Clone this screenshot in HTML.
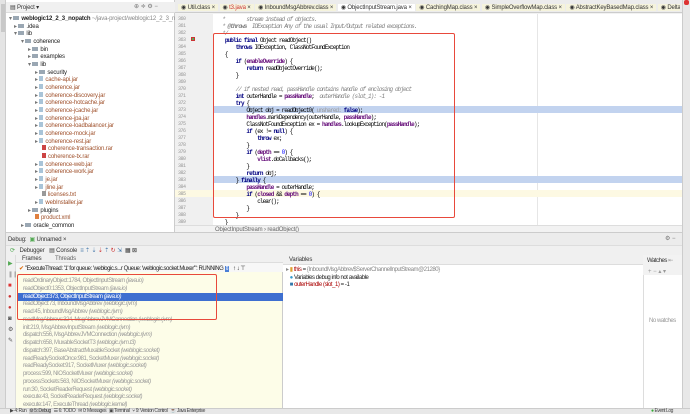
<!DOCTYPE html><html><head><meta charset="utf-8"><style>
*{margin:0;padding:0;box-sizing:border-box}
body{width:690px;height:414px;overflow:hidden;background:#f2f2f2;font-family:"Liberation Sans",sans-serif;font-size:6px;position:relative;color:#222}
.a{position:absolute;white-space:nowrap}
.s{letter-spacing:-0.45px}
.t{letter-spacing:-0.15px}
.m{font-family:"Liberation Mono",monospace;font-size:6px;letter-spacing:-0.9px}
pre.m{white-space:pre}
.k{color:#000080;font-weight:bold}
.f{color:#660e7a;font-weight:bold}
.c{color:#808080;font-style:italic}
.br{color:#a0522d}
.fo{display:inline-block;width:6px;height:4px;background:#9aa7b3;margin-right:2px;vertical-align:-0px}
.jr{display:inline-block;width:4px;height:5px;background:#a9c4d8;margin-right:2px}
</style></head><body>
<div class="a" style="left:0;top:0;width:6px;height:408px;background:#e4e4e4;border-right:1px solid #ccc"></div>
<div class="a" style="left:1px;top:4px;width:4px;height:28px;background:#c8c8c8"></div>
<div class="a" style="left:6px;top:0;width:169px;height:232px;background:#fff;border-right:1px solid #ccc"></div>
<div class="a" style="left:6px;top:2px;width:169px;height:11px;background:#f0f0f0;border-bottom:1px solid #ddd"></div>
<div class="a t" style="left:10px;top:4px;color:#333">▤ Project ▾</div>
<div class="a" style="left:134px;top:3px;color:#777">⊕ ≑ ⚙ −</div>
<div class="a t" style="left:9px;top:15px"><span style="color:#777">▾ </span><span class="fo"></span><b>weblogic12_2_3_nopatch</b> <span style="color:#888">~/java-project/weblogic12_2_3_n</span></div>
<div class="a t" style="left:14px;top:23px"><span style="color:#777">▸ </span><span class="fo"></span>.idea</div>
<div class="a t" style="left:14px;top:30px"><span style="color:#777">▾ </span><span class="fo"></span>lib</div>
<div class="a t" style="left:21px;top:38px"><span style="color:#777">▾ </span><span class="fo"></span>coherence</div>
<div class="a t" style="left:28px;top:46px"><span style="color:#777">▸ </span><span class="fo"></span>bin</div>
<div class="a t" style="left:28px;top:53px"><span style="color:#777">▸ </span><span class="fo"></span>examples</div>
<div class="a t" style="left:28px;top:61px"><span style="color:#777">▾ </span><span class="fo"></span>lib</div>
<div class="a t" style="left:35px;top:69px"><span style="color:#777">▸ </span><span class="fo"></span>security</div>
<div class="a t br" style="left:35px;top:76px"><span style="color:#777">▸ </span><span class="jr"></span>cache-api.jar</div>
<div class="a t br" style="left:35px;top:84px"><span style="color:#777">▸ </span><span class="jr"></span>coherence.jar</div>
<div class="a t br" style="left:35px;top:92px"><span style="color:#777">▸ </span><span class="jr"></span>coherence-discovery.jar</div>
<div class="a t br" style="left:35px;top:99px"><span style="color:#777">▸ </span><span class="jr"></span>coherence-hotcache.jar</div>
<div class="a t br" style="left:35px;top:107px"><span style="color:#777">▸ </span><span class="jr"></span>coherence-jcache.jar</div>
<div class="a t br" style="left:35px;top:115px"><span style="color:#777">▸ </span><span class="jr"></span>coherence-jpa.jar</div>
<div class="a t br" style="left:35px;top:122px"><span style="color:#777">▸ </span><span class="jr"></span>coherence-loadbalancer.jar</div>
<div class="a t br" style="left:35px;top:130px"><span style="color:#777">▸ </span><span class="jr"></span>coherence-mock.jar</div>
<div class="a t br" style="left:35px;top:138px"><span style="color:#777">▸ </span><span class="jr"></span>coherence-rest.jar</div>
<div class="a t br" style="left:42px;top:145px"><span class="jr" style="background:#c44"></span>coherence-transaction.rar</div>
<div class="a t br" style="left:42px;top:153px"><span class="jr" style="background:#c44"></span>coherence-tx.rar</div>
<div class="a t br" style="left:35px;top:161px"><span style="color:#777">▸ </span><span class="jr"></span>coherence-web.jar</div>
<div class="a t br" style="left:35px;top:168px"><span style="color:#777">▸ </span><span class="jr"></span>coherence-work.jar</div>
<div class="a t br" style="left:35px;top:176px"><span style="color:#777">▸ </span><span class="jr"></span>je.jar</div>
<div class="a t br" style="left:35px;top:184px"><span style="color:#777">▸ </span><span class="jr"></span>jline.jar</div>
<div class="a t br" style="left:42px;top:191px"><span class="jr" style="background:#999"></span>licenses.txt</div>
<div class="a t br" style="left:35px;top:199px"><span style="color:#777">▸ </span><span class="jr"></span>webInstaller.jar</div>
<div class="a t" style="left:28px;top:207px"><span style="color:#777">▸ </span><span class="fo"></span>plugins</div>
<div class="a t br" style="left:35px;top:214px"><span class="jr" style="background:#e08040"></span>product.xml</div>
<div class="a t" style="left:21px;top:222px"><span style="color:#777">▸ </span><span class="fo"></span>oracle_common</div>
<div class="a" style="left:175px;top:0;width:507px;height:13px;background:#ececec;border-bottom:1px solid #ccc"></div>
<div class="a t" style="left:178px;top:4px;color:#333;overflow:hidden;width:502px">
<span style="background:#f5f3dc;padding:1px 3px">◉ Util.class ×</span>
<span style="background:#f5f3dc;padding:1px 3px">◉ <span style="color:#c33">t3.java</span> ×</span>
<span style="background:#f5f3dc;padding:1px 3px">◉ InboundMsgAbbrev.class ×</span>
<span style="background:#fff;padding:1px 3px">◉ ObjectInputStream.java ×</span>
<span style="background:#f5f3dc;padding:1px 3px">◉ CachingMap.class ×</span>
<span style="background:#f5f3dc;padding:1px 3px">◉ SimpleOverflowMap.class ×</span>
<span style="background:#f5f3dc;padding:1px 3px">◉ AbstractKeyBasedMap.class ×</span>
<span style="background:#f5f3dc;padding:1px 3px">◉ DeltaMap.class ×</span>
<span style="background:#f5f3dc;padding:1px 3px">◉ Observ</span></div>
<div class="a" style="left:175px;top:14px;width:507px;height:211px;background:#fff"></div>
<div class="a" style="left:175px;top:14px;width:38px;height:211px;background:#f0f0f0"></div>
<div class="a" style="left:537px;top:14px;width:1px;height:211px;background:#e6e6e6"></div>
<div class="a" style="left:213px;top:106px;width:469px;height:7px;background:#c2d3ef"></div>
<div class="a" style="left:213px;top:176px;width:469px;height:7px;background:#c2d3ef"></div>
<div class="a" style="left:213px;top:190px;width:469px;height:7px;background:#fdf9e3"></div>
<div class="a" style="left:175px;top:190px;width:38px;height:7px;background:#fdf9e3"></div>
<div class="a m" style="left:178px;top:16px;color:#999;line-height:7px;font-size:5px;letter-spacing:-0.5px">360<br>361<br>362<br>363<br>364<br>365<br>366<br>367<br>368<br>369<br>370<br>371<br>372<br>373<br>374<br>375<br>376<br>377<br>378<br>379<br>380<br>381<br>382<br>383<br>384<br>385<br>386<br>387<br>388<br>389</div>
<div class="a" style="left:191px;top:37px;width:4px;height:4px;background:#5a5;border:1px solid #c33"></div>
<pre class="a m" style="left:214px;top:16px;line-height:7px;color:#000"><span class="c">   *        stream instead of objects.
   * <b>@throws</b>  IOException Any of the usual Input/Output related exceptions.
   */</span>
    <span class="k">public final</span> Object readObject()
        <span class="k">throws</span> IOException, ClassNotFoundException
    {
        <span class="k">if</span> (<span class="f">enableOverride</span>) {
            <span class="k">return</span> readObjectOverride();
        }

        <span class="c">// if nested read, passHandle contains handle of enclosing object</span>
        <span class="k">int</span> outerHandle = <span class="f">passHandle</span>;  <span class="c">outerHandle (slot_1): -1</span>
        <span class="k">try</span> {
            Object obj = readObject0( <span style="color:#999">unshared:</span> <span class="k">false</span>);
            <span class="f">handles</span>.markDependency(outerHandle, <span class="f">passHandle</span>);
            ClassNotFoundException ex = <span class="f">handles</span>.lookupException(<span class="f">passHandle</span>);
            <span class="k">if</span> (ex != <span class="k">null</span>) {
                <span class="k">throw</span> ex;
            }
            <span class="k">if</span> (<span class="f">depth</span> == <span style="color:#00f">0</span>) {
                <span class="f">vlist</span>.doCallbacks();
            }
            <span class="k">return</span> obj;
        } <span class="k">finally</span> {
            <span class="f">passHandle</span> = outerHandle;
            <span class="k">if</span> (<span class="f">closed</span> &amp;&amp; <span class="f">depth</span> == <span style="color:#00f">0</span>) {
                clear();
            }
        }
    }</pre>
<div class="a" style="left:213px;top:33px;width:242px;height:185px;border:1px solid #e8493b;border-radius:2px"></div>
<div class="a" style="left:175px;top:225px;width:507px;height:11px;background:#f2f2f2;border-top:1px solid #ddd"></div>
<div class="a t" style="left:215px;top:227px;color:#666">ObjectInputStream › readObject()</div>
<div class="a" style="left:682px;top:0;width:8px;height:408px;background:#e8e8e8;border-left:1px solid #ccc"></div>
<div class="a" style="left:684px;top:0;width:5px;height:5px;background:#d33;border-radius:2px"></div>
<div class="a" style="left:6px;top:232px;width:676px;height:13px;background:#ececec;border-top:1px solid #ccc"></div>
<div class="a t" style="left:8px;top:236px;color:#333">Debug: &nbsp;<span style="color:#5a5">▣</span> Unnamed ×</div>
<div class="a" style="left:665px;top:235px;color:#777">⚙ −</div>
<div class="a" style="left:6px;top:245px;width:676px;height:10px;background:#f0f0f0;border-top:1px solid #ddd"></div>
<div class="a t" style="left:10px;top:247px;color:#333"><span style="color:#5a5">⟳</span> &nbsp; Debugger &nbsp; ▤ Console &nbsp;<span style="color:#47a">≡ ⇡ ⇣ <span style="color:#c33">⇣</span> ⇡ <span style="color:#c33">↻</span> ⇲</span> &nbsp;▦ ⊠</div>
<div class="a" style="left:6px;top:255px;width:10px;height:153px;background:#f0f0f0;border-right:1px solid #ddd"></div>
<div class="a" style="left:8px;top:259px;color:#5a5;line-height:11px">▶<br><span style="color:#aaa">❚❚</span><br><span style="color:#d33">■</span><br><span style="color:#c33">●</span><br><span style="color:#c33">●</span><br><span style="color:#555">◙</span><br><span style="color:#555">⚙</span><br><span style="color:#555">✎</span></div>
<div class="a" style="left:16px;top:255px;width:267px;height:153px;background:#fdfde8;border-right:1px solid #ccc"></div>
<div class="a" style="left:16px;top:255px;width:267px;height:8px;background:#f0f0f0;border-bottom:1px solid #ddd"></div>
<div class="a t" style="left:22px;top:256px;color:#333">Frames &nbsp; &nbsp; &nbsp; &nbsp; <span style="color:#666">Threads</span></div>
<div class="a" style="left:16px;top:263px;width:267px;height:9px;background:#f7f7f7"></div>
<div class="a s" style="left:19px;top:265px;color:#222"><span style="color:#d60">✔</span> "ExecuteThread: '1' for queue: 'weblogic.s...r Queue: 'weblogic.socket.Muxer'": RUNNING <span style="background:#4a7fd6;color:#fff">⇕</span> &nbsp; ↑ ↓ ⊤</div>
<div class="a" style="left:17px;top:293px;width:266px;height:8px;background:#3e6fd0"></div>
<div class="a s" style="left:23px;top:278px;line-height:7.75px;color:#999">readOrdinaryObject:1784, ObjectInputStream <i>(java.io)</i><br>readObject0:1353, ObjectInputStream <i>(java.io)</i><br><span style="color:#fff">readObject:373, ObjectInputStream <i>(java.io)</i></span><br>readObject:73, InboundMsgAbbrev <i>(weblogic.rjvm)</i><br>read:45, InboundMsgAbbrev <i>(weblogic.rjvm)</i><br>readMsgAbbrevs:324, MsgAbbrevJVMConnection <i>(weblogic.rjvm)</i><br>init:219, MsgAbbrevInputStream <i>(weblogic.rjvm)</i><br>dispatch:556, MsgAbbrevJVMConnection <i>(weblogic.rjvm)</i><br>dispatch:658, MuxableSocketT3 <i>(weblogic.rjvm.t3)</i><br>dispatch:397, BaseAbstractMuxableSocket <i>(weblogic.socket)</i><br>readReadySocketOnce:981, SocketMuxer <i>(weblogic.socket)</i><br>readReadySocket:917, SocketMuxer <i>(weblogic.socket)</i><br>process:599, NIOSocketMuxer <i>(weblogic.socket)</i><br>processSockets:563, NIOSocketMuxer <i>(weblogic.socket)</i><br>run:30, SocketReaderRequest <i>(weblogic.socket)</i><br>execute:43, SocketReaderRequest <i>(weblogic.socket)</i><br>execute:147, ExecuteThread <i>(weblogic.kernel)</i></div>
<div class="a" style="left:17px;top:274px;width:200px;height:46px;border:1px solid #e8493b;border-radius:2px"></div>
<div class="a" style="left:283px;top:255px;width:360px;height:153px;background:#fff"></div>
<div class="a" style="left:283px;top:255px;width:360px;height:10px;background:#f0f0f0;border-bottom:1px solid #ddd"></div>
<div class="a t" style="left:289px;top:257px;color:#333">Variables</div>
<div class="a s" style="left:286px;top:267px;line-height:7.7px"><span style="color:#888">▸</span> <span style="color:#e0a030">▮</span> <span style="color:#a00">this</span> = <span style="color:#888">{InboundMsgAbbrev$ServerChannelInputStream@21280}</span><br>&nbsp;&nbsp; <span style="color:#39c">●</span> Variables debug info not available<br>&nbsp;&nbsp; <span style="color:#37a">■</span> <span style="color:#a00">outerHandle (slot_1)</span> = -1</div>
<div class="a" style="left:643px;top:255px;width:39px;height:153px;background:#fff;border-left:1px solid #ddd"></div>
<div class="a" style="left:643px;top:255px;width:39px;height:20px;background:#f2f2f2"></div>
<div class="a s" style="left:647px;top:257px;color:#333">Watches <span style="color:#999">⇤</span></div>
<div class="a" style="left:648px;top:268px;color:#999">+ − ▴ ▾</div>
<div class="a s" style="left:649px;top:318px;color:#999">No watches</div>
<div class="a" style="left:0;top:408px;width:690px;height:6px;background:#e8e8e8;border-top:1px solid #ccc"></div>
<div class="a s" style="left:10px;top:408px;font-size:5px;color:#444;line-height:6px">▶ 4: Run &nbsp; <span style="background:#ccc">⚙ 5: Debug</span> &nbsp; ☰ 6: TODO &nbsp; ✉ 0: Messages &nbsp; ▣ Terminal &nbsp; ⑂ 9: Version Control &nbsp; ☕ Java Enterprise</div>
<div class="a s" style="left:651px;top:408px;font-size:5px;color:#444;line-height:6px"><span style="color:#3a3">●</span> Event Log</div>
</body></html>
